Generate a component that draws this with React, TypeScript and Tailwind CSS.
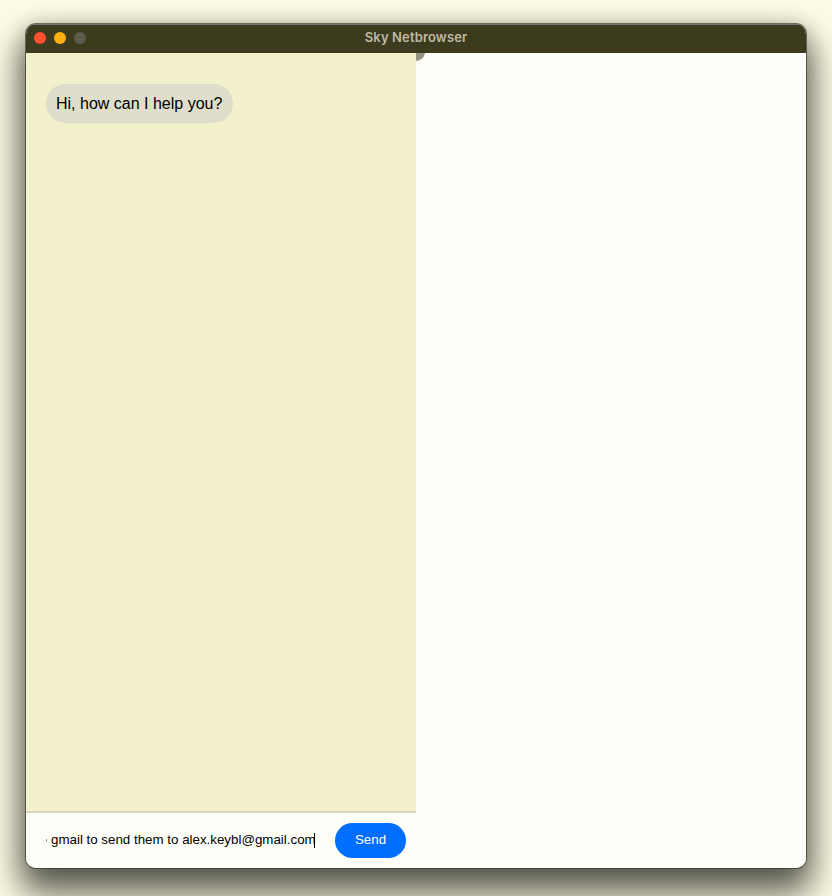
import React from "react";

function TitleBar() {
  return (
    <header className="relative flex h-[29px] shrink-0 items-center border-t border-[#77776f] bg-[#3d3b1e] px-2 pb-[2px]">
      <div className="flex gap-2">
        <span className="size-3 rounded-full bg-[#ff5030]" />
        <span className="size-3 rounded-full bg-[#ffb010]" />
        <span className="size-3 rounded-full bg-[#5d5b4d]" />
      </div>
      <h1 className="absolute inset-x-0 top-0 text-center font-['Inter',sans-serif] text-[13px] leading-[25px] font-semibold tracking-[0.14px] text-[#bcbaa6]">
        Sky Netbrowser
      </h1>
    </header>
  );
}

function ChatPane() {
  return (
    <section className="flex w-[390px] shrink-0 flex-col">
      <div className="flex flex-1 flex-col items-start bg-[#f2f1cc] px-5 pt-[31px]">
        <p className="h-[39px] w-[187px] rounded-[20px] bg-[#dfdecb] pl-[10px] text-[16px] leading-[39px] whitespace-nowrap text-black">
          Hi, how can I help you?
        </p>
      </div>
      <form className="flex h-[57px] shrink-0 items-center border-t-2 border-[#d8d6bd] bg-[#fefef8] pr-[10px] pl-5">
        <div className="flex h-5 flex-1 items-center pb-px text-[13.33px] whitespace-pre text-black">
          <span className="mr-1 h-[3px] w-px bg-[#999]" />
          <span>gmail to send them to alex.keybl@gmail.com</span>
          <span className="-ml-[2px] h-[15px] w-px shrink-0 bg-black" />
        </div>
        <button
          type="button"
          className="h-[35px] w-[71px] rounded-[18px] bg-[#006eff] pb-px text-[13.33px] text-white"
        >
          Send
        </button>
      </form>
    </section>
  );
}

export default function App() {
  return (
    <div className="h-[896px] w-[832px] overflow-hidden bg-[#fdfce4] px-[26px] pt-6 font-['Liberation_Sans',Arial,sans-serif]">
      <main className="flex h-[844px] w-[780px] flex-col overflow-hidden rounded-[10px] bg-[#fefef8] shadow-[0_0_0_1px_rgba(40,40,30,0.6),0_20px_34px_5px_rgba(30,30,28,0.72),0_2px_20px_rgba(30,30,22,0.2)]">
        <TitleBar />
        <div className="flex min-h-0 flex-1">
          <ChatPane />
          <section className="flex-1 overflow-hidden bg-[#fefef8]">
            <div className="-mt-[10px] -ml-[9px] size-[18px] rounded-full bg-[#969480]" />
          </section>
        </div>
      </main>
    </div>
  );
}
